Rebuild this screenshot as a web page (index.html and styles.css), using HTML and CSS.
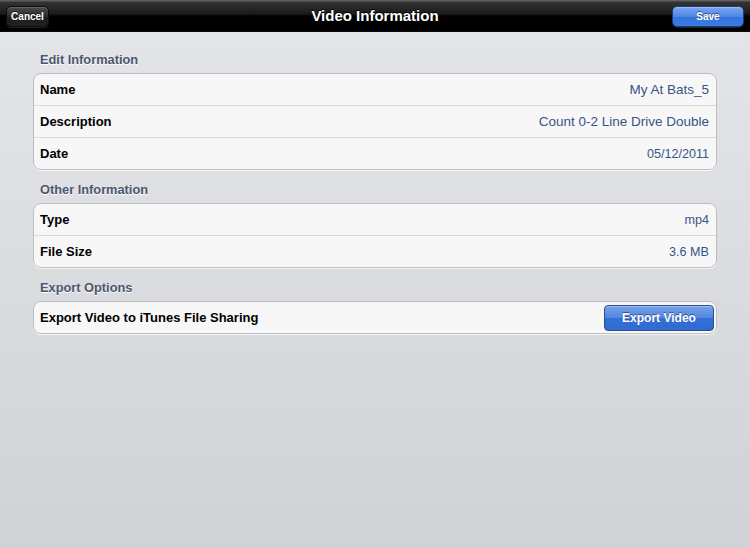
FILE: index.html
```html
<!DOCTYPE html>
<html>
<head>
<meta charset="utf-8">
<link rel="stylesheet" href="styles.css">
</head>
<body>
<div class="app">
  <header class="navbar">
    <div class="nav-left"><button class="nav-btn cancel">Cancel</button></div>
    <h1 class="title">Video Information</h1>
    <div class="nav-right"><button class="nav-btn save">Save</button></div>
  </header>
  <main class="content">
    <section class="section">
      <h2 class="section-title">Edit Information</h2>
      <div class="group">
        <div class="row"><span class="label">Name</span><span class="value">My At Bats_5</span></div>
        <div class="row"><span class="label">Description</span><span class="value">Count 0-2 Line Drive Double</span></div>
        <div class="row"><span class="label">Date</span><span class="value small">05/12/2011</span></div>
      </div>
    </section>
    <section class="section">
      <h2 class="section-title">Other Information</h2>
      <div class="group">
        <div class="row"><span class="label">Type</span><span class="value small">mp4</span></div>
        <div class="row"><span class="label">File Size</span><span class="value small">3.6 MB</span></div>
      </div>
    </section>
    <section class="section">
      <h2 class="section-title">Export Options</h2>
      <div class="group">
        <div class="row"><span class="label">Export Video to iTunes File Sharing</span><button class="export-btn">Export Video</button></div>
      </div>
    </section>
  </main>
</div>
</body>
</html>
```

FILE: styles.css
```css
html, body {
  margin: 0;
  padding: 0;
  height: 100%;
}
body {
  font-family: "Liberation Sans", Arial, sans-serif;
  background: linear-gradient(to bottom, #e4e6ea 0%, #d0d2d6 100%);
}
.app {
  display: flex;
  flex-direction: column;
  min-height: 548px;
}
.navbar {
  height: 32px;
  box-sizing: border-box;
  display: grid;
  grid-template-columns: 1fr auto 1fr;
  align-items: center;
  padding: 0 6px;
  background: linear-gradient(to bottom, #6a6a6a 0%, #333 8%, #1a1a1a 45%, #000 52%, #000 100%);
  border-bottom: 1px solid #0a0a0a;
}
.nav-left {
  display: flex;
  justify-content: flex-start;
}
.nav-right {
  display: flex;
  justify-content: flex-end;
}
.title {
  margin: 0;
  color: #fff;
  font-size: 15px;
  font-weight: bold;
  text-shadow: 0 -1px 0 #000;
  text-align: center;
}
.nav-btn {
  height: 21px;
  margin-top: 1px;
  border-radius: 5px;
  font-family: "Liberation Sans", Arial, sans-serif;
  font-size: 10px;
  font-weight: bold;
  color: #fff;
  text-shadow: 0 -1px 0 rgba(0,0,0,0.5);
  padding: 0;
  cursor: pointer;
}
.cancel {
  width: 43px;
  background: linear-gradient(to bottom, #4a4a4a 0%, #2c2c2c 50%, #1c1c1c 52%, #222 100%);
  border: 1px solid #0c0c0c;
  box-shadow: inset 0 1px 0 rgba(255,255,255,0.15), 0 1px 0 rgba(255,255,255,0.12);
}
.save {
  width: 72px;
  background: linear-gradient(to bottom, #7ea7ef 0%, #4d86e4 50%, #3474df 52%, #3a7be2 100%);
  border: 1px solid #1d3e78;
  box-shadow: inset 0 1px 0 rgba(255,255,255,0.25), 0 1px 0 rgba(255,255,255,0.12);
}
.content {
  padding: 19px 33px 0 33px;
}
.section + .section {
  margin-top: 11px;
}
.section-title {
  margin: 0;
  height: 22px;
  box-sizing: border-box;
  padding: 1px 0 5px 7px;
  line-height: 16px;
  font-size: 12.8px;
  font-weight: bold;
  color: #4c566c;
  text-shadow: 0 1px 0 #fff;
}
.group {
  background: #f7f7f7;
  border: 1px solid #bcbec3;
  border-radius: 8px;
  box-shadow: 0 1px 0 rgba(255,255,255,0.7);
  overflow: hidden;
}
.row {
  height: 31px;
  display: flex;
  align-items: center;
  justify-content: space-between;
  padding: 0 7px 0 6px;
}
.row + .row {
  border-top: 1px solid #d9d9db;
}
.label {
  font-size: 13px;
  font-weight: bold;
  color: #000;
}
.value {
  font-size: 13.5px;
  color: #385487;
}
.value.small {
  font-size: 12.6px;
}
.export-btn {
  width: 110px;
  height: 26px;
  margin-right: -5px;
  border: 1px solid #2d4e8c;
  border-radius: 4px;
  background: linear-gradient(to bottom, #7aa3ea 0%, #4f85de 50%, #3370d6 52%, #2f6ad2 100%);
  box-shadow: inset 0 1px 0 rgba(255,255,255,0.3);
  font-family: "Liberation Sans", Arial, sans-serif;
  font-size: 12px;
  font-weight: bold;
  color: #fff;
  text-shadow: 0 -1px 0 rgba(0,0,0,0.45);
  padding: 0;
  cursor: pointer;
}
```
